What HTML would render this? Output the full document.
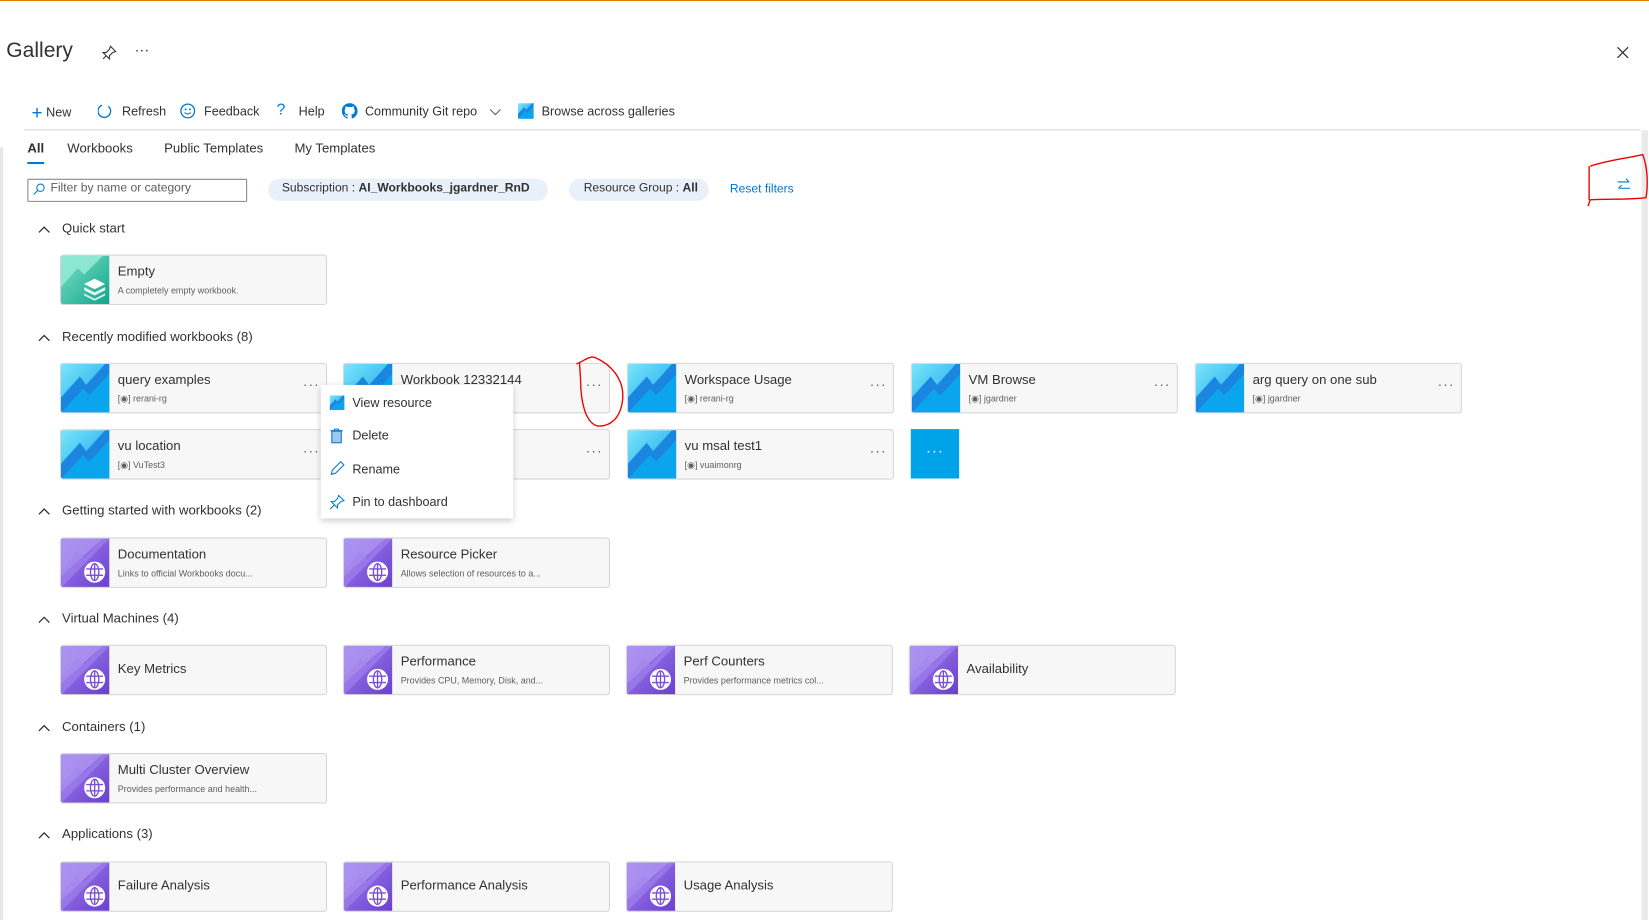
<!DOCTYPE html>
<html><head><meta charset="utf-8"><style>
html,body{margin:0;padding:0;background:#fff;overflow:hidden;width:1649px;height:920px}
#w{position:absolute;left:0;top:0;width:1568px;height:875px;transform:scale(1.0517);transform-origin:0 0;font-family:"Segoe UI","Liberation Sans",sans-serif;color:#323130}
.a{position:absolute;white-space:nowrap}
.card{position:absolute;width:252px;height:46px;background:#f7f7f7;border:1px solid #d6d6d6;border-radius:3px;overflow:hidden}
.card svg{position:absolute;left:0;top:0}
.card .t{position:absolute;left:54px;top:8px;font-size:12.5px;color:#323130}
.card .t1{position:absolute;left:54px;top:15px;font-size:12.5px}
.card .s{position:absolute;left:54px;top:28px;font-size:8.5px;color:#605e5c}
.card .d{position:absolute;right:6px;top:12px;font-size:13px;color:#605e5c;letter-spacing:1px}
.sec{position:absolute;left:36px;font-size:12.5px;color:#323130}
.sec svg{vertical-align:middle;margin-right:11px}
.tb{font-size:12px;top:99px}
.mi{position:absolute;left:30px;font-size:12px;color:#323130}
</style></head><body><div id="w">
<svg width="0" height="0" style="position:absolute">
<defs>
<linearGradient id="gb" x1="0" y1="0" x2="1" y2="1"><stop offset="0" stop-color="#7be6fb"/><stop offset="1" stop-color="#0a9ee8"/></linearGradient>
<linearGradient id="gp" x1="0" y1="0" x2="1" y2="1"><stop offset="0" stop-color="#9d7fec"/><stop offset="1" stop-color="#6b3fcf"/></linearGradient>
<symbol id="blue" viewBox="0 0 46 47"><rect width="46" height="47" fill="url(#gb)"/><polygon points="0,47 0,32 18,12 24,20 42,0 46,0 46,10 27,30 21,24 0,47" fill="#1b86e0"/><polygon points="0,47 21,24 27,30 46,10 46,47" fill="#0aa5ec"/></symbol>
<symbol id="purp" viewBox="0 0 46 47"><rect width="46" height="47" fill="url(#gp)"/><polygon points="0,0 40,0 0,36" fill="#b39df2" opacity=".7"/><polygon points="0,30 16,12 22,18 40,0 46,0 0,47" fill="#a385ee" opacity=".6"/><circle cx="32" cy="32" r="10" fill="#fff"/><g stroke="#7a4fd6" stroke-width="1.3" fill="none"><ellipse cx="32" cy="32" rx="4" ry="8"/><line x1="24" y1="29" x2="40" y2="29"/><line x1="24" y1="35" x2="40" y2="35"/><line x1="32" y1="24" x2="32" y2="40"/></g></symbol>
<symbol id="chev" viewBox="0 0 12 8"><polyline points="1,7 6,2 11,7" fill="none" stroke="#323130" stroke-width="1.2"/></symbol>
</defs></svg>
<div class="a" style="left:0;top:0;width:1568px;height:1px;background:#e07b00"></div>
<div class="a" style="left:6px;top:37px;font-size:20px;color:#323130">Gallery</div>
<svg class="a" style="left:97px;top:43px" width="14" height="14" viewBox="0 0 14 14"><path d="M8 1 L13 6 L10 7 L7 10 L7 13 L1 7 L4 7 L7 4 Z M4 10 L1 13" fill="none" stroke="#323130" stroke-width="1"/></svg>
<div class="a" style="left:128px;top:39px;font-size:14px">···</div>
<svg class="a" style="left:1537px;top:44px" width="12" height="12"><path d="M1 1L11 11M11 1L1 11" stroke="#323130" stroke-width="1.2"/></svg>
<div class="a tb" style="left:30px;top:97px"><span style="color:#0078d4;font-size:18px;vertical-align:-2px">+</span> New</div>
<svg class="a" style="left:93px;top:98px" width="14" height="16"><path d="M4 2 A6 6 0 1 0 10 3" fill="none" stroke="#0078d4" stroke-width="1.3"/></svg>
<div class="a tb" style="left:116px">Refresh</div>
<svg class="a" style="left:171px;top:98px" width="15" height="15"><circle cx="7.5" cy="7.5" r="6.5" fill="none" stroke="#0078d4" stroke-width="1.2"/><circle cx="5.5" cy="6" r=".9" fill="#0078d4"/><circle cx="9.5" cy="6" r=".9" fill="#0078d4"/><path d="M4.5 9 Q7.5 12 10.5 9" fill="none" stroke="#0078d4"/></svg>
<div class="a tb" style="left:194px">Feedback</div>
<div class="a tb" style="left:263px;color:#0078d4;font-size:15px;top:96px">?</div>
<div class="a tb" style="left:284px">Help</div>
<svg class="a" style="left:325px;top:98px" width="15" height="15" viewBox="0 0 16 16"><path fill="#0078d4" d="M8 0C3.58 0 0 3.58 0 8c0 3.54 2.29 6.530 5.47 7.590.4.07.55-.17.55-.38v-1.33c-2.23.48-2.7-1.07-2.7-1.07-.36-.93-.89-1.170-.89-1.17-.73-.5.06-.49.06-.49.8.06 1.23.83 1.23.83.72 1.22 1.87.87 2.33.66.07-.52.28-.87.5-1.07-1.78-.2-3.64-.89-3.64-3.950 0-.87.31-1.59.82-2.15-.08-.2-.36-1.02.08-2.12 0 0 .67-.21 2.2.82a7.6 7.6 0 014 0c1.53-1.04 2.2-.82 2.2-.82.44 1.1.16 1.92.08 2.12.51.56.82 1.27.82 2.15 0 3.07-1.87 3.75-3.65 3.95.29.25.54.73.54 1.48v2.2c0 .21.15.46.55.38A8.01 8.01 0 0016 8c0-4.42-3.58-8-8-8z"/></svg>
<div class="a tb" style="left:347px">Community Git repo</div>
<svg class="a" style="left:465px;top:103px" width="12" height="8"><polyline points="1,1 6,6 11,1" fill="none" stroke="#605e5c"/></svg>
<svg class="a" style="left:492px;top:98px" width="16" height="15"><use href="#blue" width="16" height="15"/></svg>
<div class="a tb" style="left:515px">Browse across galleries</div>
<div class="a" style="left:23px;top:123px;width:1537px;height:1px;background:#d6d6d6"></div>
<div class="a" style="left:0;top:140px;width:3px;height:735px;background:#e6e6e6"></div>
<div class="a" style="left:1561px;top:124px;width:6px;height:751px;background:#eaeaea"></div>
<div class="a" style="left:26px;top:134px;font-size:12.5px;font-weight:600">All</div>
<div class="a" style="left:26px;top:154px;width:16px;height:2px;background:#0078d4"></div>
<div class="a" style="left:64px;top:134px;font-size:12.5px">Workbooks</div>
<div class="a" style="left:156px;top:134px;font-size:12.5px">Public Templates</div>
<div class="a" style="left:280px;top:134px;font-size:12.5px">My Templates</div>
<div class="a" style="left:26px;top:170px;width:207px;height:20px;border:1px solid #8a8886;border-radius:1px"></div>
<svg class="a" style="left:31px;top:174px" width="12" height="12"><circle cx="7.5" cy="4.5" r="3.5" fill="none" stroke="#0078d4"/><path d="M5 7L1 11" stroke="#0078d4"/></svg>
<div class="a" style="left:48px;top:173px;font-size:11.5px;color:#605e5c">Filter by name or category</div>
<div class="a" style="left:255px;top:170px;width:266px;height:21px;background:#e8f1fa;border-radius:11px"></div>
<div class="a" style="left:268px;top:173px;font-size:11.5px">Subscription : <b>AI_Workbooks_jgardner_RnD</b></div>
<div class="a" style="left:541px;top:170px;width:133px;height:21px;background:#e8f1fa;border-radius:11px"></div>
<div class="a" style="left:555px;top:173px;font-size:11.5px">Resource Group : <b>All</b></div>
<div class="a" style="left:694px;top:174px;font-size:11.5px;color:#0078d4">Reset filters</div>
<svg class="a" style="left:1536px;top:169px" width="16" height="14"><path d="M2 4H13M10 1L13 4M14 10H3M6 7L3 10" fill="none" stroke="#0078d4" stroke-width="1"/></svg>

<div class="sec" style="top:210px"><svg width="12" height="8"><use href="#chev"/></svg>Quick start</div>
<div class="card" style="left:57px;top:242px"><svg width="46" height="47" viewBox="0 0 46 47"><defs><linearGradient id="gg" x1="0" y1="0" x2="1" y2="1"><stop offset="0" stop-color="#7ee0c8"/><stop offset="1" stop-color="#0fa58a"/></linearGradient></defs><rect width="46" height="47" fill="url(#gg)"/><polygon points="0,30 16,12 22,18 40,0 0,0" fill="#8de6d2"/><polygon points="32,22 42,27 32,32 22,27" fill="#fff"/><polygon points="22,30 32,35 42,30 42,33 32,38 22,33" fill="#e6f7f3"/><polygon points="22,36 32,41 42,36 42,38 32,43 22,38" fill="#cfeee7"/></svg><div class="t">Empty</div><div class="s">A completely empty workbook.</div></div>

<div class="sec" style="top:313px"><svg width="12" height="8"><use href="#chev"/></svg>Recently modified workbooks (8)</div>
<div class="card" style="left:57px;top:345px"><svg width="46" height="47"><use href="#blue"/></svg><div class="t">query examples</div><div class="s">[◉] rerani-rg</div><div class="d">···</div></div>
<div class="card" style="left:326px;top:345px"><svg width="46" height="47"><use href="#blue"/></svg><div class="t">Workbook 12332144</div><div class="d">···</div></div>
<div class="card" style="left:596px;top:345px"><svg width="46" height="47"><use href="#blue"/></svg><div class="t">Workspace Usage</div><div class="s">[◉] rerani-rg</div><div class="d">···</div></div>
<div class="card" style="left:866px;top:345px"><svg width="46" height="47"><use href="#blue"/></svg><div class="t">VM Browse</div><div class="s">[◉] jgardner</div><div class="d">···</div></div>
<div class="card" style="left:1136px;top:345px"><svg width="46" height="47"><use href="#blue"/></svg><div class="t">arg query on one sub</div><div class="s">[◉] jgardner</div><div class="d">···</div></div>
<div class="card" style="left:57px;top:408px"><svg width="46" height="47"><use href="#blue"/></svg><div class="t">vu location</div><div class="s">[◉] VuTest3</div><div class="d">···</div></div>
<div class="card" style="left:326px;top:408px"><svg width="46" height="47"><use href="#blue"/></svg><div class="d">···</div></div>
<div class="card" style="left:596px;top:408px"><svg width="46" height="47"><use href="#blue"/></svg><div class="t">vu msal test1</div><div class="s">[◉] vuaimonrg</div><div class="d">···</div></div>
<div class="a" style="left:866px;top:408px;width:46px;height:47px;background:#00a2e8;color:#fff;font-size:14px;text-align:center;line-height:40px;letter-spacing:1px">···</div>

<div class="a" style="left:305px;top:366px;width:183px;height:127px;background:#fff;box-shadow:0 2px 6px rgba(0,0,0,.22)">
<svg class="a" style="left:8px;top:10px" width="15" height="14"><use href="#blue" width="15" height="14"/></svg><div class="mi" style="top:10px">View resource</div>
<svg class="a" style="left:9px;top:41px" width="12" height="15"><rect x="1.5" y="3" width="9" height="11" fill="#9cc8ee" stroke="#0078d4"/><path d="M0 2.5H12M4 2.5V1H8V2.5" stroke="#0078d4" fill="none"/></svg><div class="mi" style="top:41px">Delete</div>
<svg class="a" style="left:8px;top:72px" width="15" height="15"><path d="M2 13L3 9L11 1L14 4L6 12Z M2 13L5 12" fill="none" stroke="#0078d4"/></svg><div class="mi" style="top:73px">Rename</div>
<svg class="a" style="left:8px;top:104px" width="15" height="15"><path d="M9 1L14 6L11 7L8 10L8 13L2 7L5 7L8 4Z M5 10L1 14" fill="none" stroke="#0078d4"/></svg><div class="mi" style="top:104px">Pin to dashboard</div>
</div>

<div class="sec" style="top:478px"><svg width="12" height="8"><use href="#chev"/></svg>Getting started with workbooks (2)</div>
<div class="card" style="left:57px;top:511px"><svg width="46" height="47"><use href="#purp"/></svg><div class="t">Documentation</div><div class="s">Links to official Workbooks docu...</div></div>
<div class="card" style="left:326px;top:511px"><svg width="46" height="47"><use href="#purp"/></svg><div class="t">Resource Picker</div><div class="s">Allows selection of resources to a...</div></div>

<div class="sec" style="top:581px"><svg width="12" height="8"><use href="#chev"/></svg>Virtual Machines (4)</div>
<div class="card" style="left:57px;top:613px"><svg width="46" height="47"><use href="#purp"/></svg><div class="t1">Key Metrics</div></div>
<div class="card" style="left:326px;top:613px"><svg width="46" height="47"><use href="#purp"/></svg><div class="t">Performance</div><div class="s">Provides CPU, Memory, Disk, and...</div></div>
<div class="card" style="left:595px;top:613px"><svg width="46" height="47"><use href="#purp"/></svg><div class="t">Perf Counters</div><div class="s">Provides performance metrics col...</div></div>
<div class="card" style="left:864px;top:613px"><svg width="46" height="47"><use href="#purp"/></svg><div class="t1">Availability</div></div>

<div class="sec" style="top:684px"><svg width="12" height="8"><use href="#chev"/></svg>Containers (1)</div>
<div class="card" style="left:57px;top:716px"><svg width="46" height="47"><use href="#purp"/></svg><div class="t">Multi Cluster Overview</div><div class="s">Provides performance and health...</div></div>

<div class="sec" style="top:786px"><svg width="12" height="8"><use href="#chev"/></svg>Applications (3)</div>
<div class="card" style="left:57px;top:819px"><svg width="46" height="47"><use href="#purp"/></svg><div class="t1">Failure Analysis</div></div>
<div class="card" style="left:326px;top:819px"><svg width="46" height="47"><use href="#purp"/></svg><div class="t1">Performance Analysis</div></div>
<div class="card" style="left:595px;top:819px"><svg width="46" height="47"><use href="#purp"/></svg><div class="t1">Usage Analysis</div></div>

<svg class="a" style="left:0;top:0" width="1568" height="875"><path d="M548 346 C556 343 560 338 566 340 C580 346 594 360 592 380 C590 398 580 406 568 405 C556 402 552 380 552 360 L551 345" fill="none" stroke="#e00" stroke-width="1.3"/><path d="M1512 158 C1530 152 1550 150 1562 147 C1567 160 1567 178 1565 188 C1550 190 1530 189 1512 190 L1510 196 M1511 158 L1511 190" fill="none" stroke="#e00" stroke-width="1.3"/></svg>
</div></body></html>
